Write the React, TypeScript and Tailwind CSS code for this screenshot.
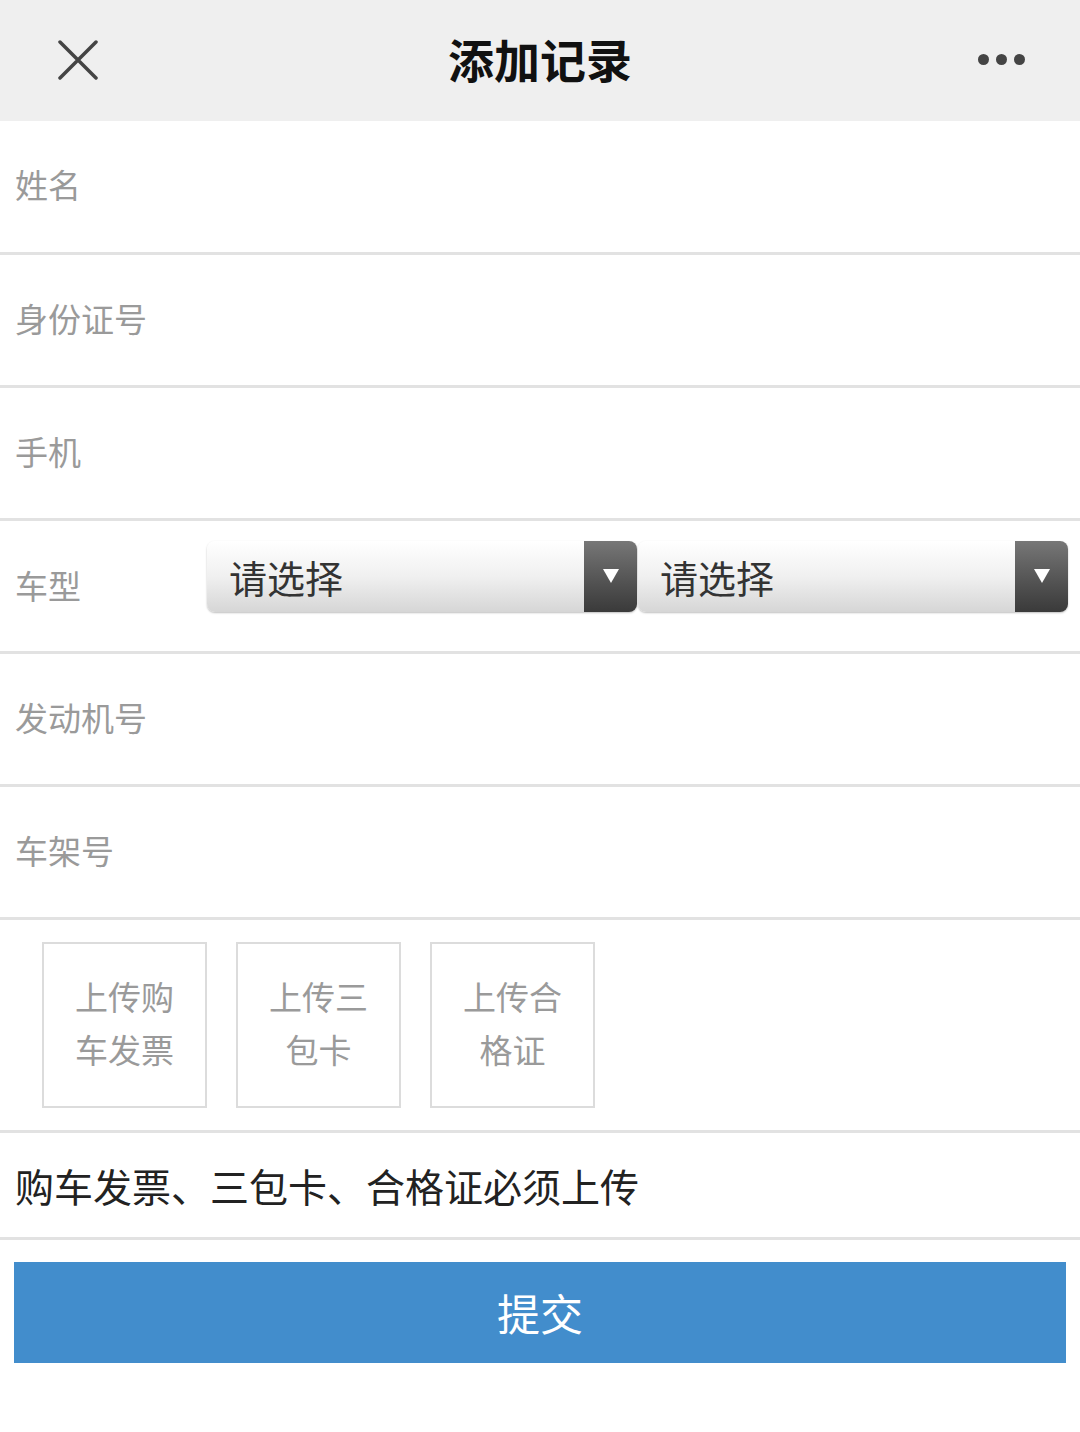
import React from "react";

const font = "font-['Noto_Sans_CJK_SC','Noto_Sans',sans-serif]";

const fields = ["姓名", "身份证号", "手机"];
const fields2 = ["发动机号", "车架号"];
const uploads = [
  ["上传购", "车发票"],
  ["上传三", "包卡"],
  ["上传合", "格证"],
];

const Select = () => (
  <div className="flex h-[71px] w-[430px] items-stretch overflow-hidden rounded-[8px] bg-gradient-to-b from-white via-[#f0f0f0] to-[#d6d6d6] shadow-[0_1px_2px_rgba(0,0,0,0.25)]">
    <div className="flex flex-1 items-center pl-[22px] text-[38px] text-[#333]">请选择</div>
    <div className="flex w-[53px] items-center justify-center bg-gradient-to-b from-[#777] to-[#3a3a3a]">
      <svg width="18" height="16" viewBox="0 0 18 16">
        <path d="M1 1 H17 L9 15 Z" fill="#fff" />
      </svg>
    </div>
  </div>
);

const Row = ({ label }: { label: string }) => (
  <div className="flex h-[133px] items-center border-b-[3px] border-[#e2e2e2] pb-[2px] pl-[15px] text-[33px] text-[#9a9a9a]">
    {label}
  </div>
);

export default function App() {
  return (
    <div className={`min-h-[1432px] w-[1080px] bg-white ${font}`}>
      <div className="relative flex h-[121px] items-center justify-center bg-[#efefef] pb-[4px]">
        <svg className="absolute left-[58px] top-[40px]" width="40" height="40" viewBox="0 0 40 40">
          <path d="M2 2 L38 38 M38 2 L2 38" stroke="#444" strokeWidth="3.5" strokeLinecap="round" />
        </svg>
        <h1 className="text-[46px] font-bold text-[#111]">添加记录</h1>
        <div className="absolute right-[55px] top-[54px] flex gap-[7px]">
          <span className="h-[11px] w-[11px] rounded-full bg-[#444]" />
          <span className="h-[11px] w-[11px] rounded-full bg-[#444]" />
          <span className="h-[11px] w-[11px] rounded-full bg-[#444]" />
        </div>
      </div>

      <div className="border-b-[3px] border-[#e2e2e2]">
        <div className="flex h-[131px] items-center pb-[4px] pl-[15px] text-[33px] text-[#9a9a9a]">姓名</div>
      </div>
      {fields.slice(1).map((f) => (
        <Row key={f} label={f} />
      ))}

      <div className="flex h-[133px] items-center border-b-[3px] border-[#e2e2e2] pl-[15px]">
        <div className="w-[192px] text-[33px] text-[#9a9a9a]">车型</div>
        <div className="-mt-[20px] flex gap-[1px]">
          <Select />
          <Select />
        </div>
      </div>

      {fields2.map((f) => (
        <Row key={f} label={f} />
      ))}

      <div className="flex h-[213px] gap-[29px] border-b-[3px] border-[#e2e2e2] pl-[42px] pt-[22px]">
        {uploads.map((u) => (
          <div
            key={u[0]}
            className="flex h-[166px] w-[165px] flex-col items-center justify-center border-2 border-[#dcdcdc] pb-[4px] text-[33px] leading-[53px] text-[#9a9a9a]"
          >
            <span>{u[0]}</span>
            <span>{u[1]}</span>
          </div>
        ))}
      </div>

      <div className="flex h-[107px] items-center border-b-[3px] border-[#e2e2e2] pl-[15px] text-[39px] text-[#222]">
        购车发票、三包卡、合格证必须上传
      </div>

      <div className="px-[14px] pt-[22px]">
        <button className="flex h-[101px] w-full items-center justify-center bg-[#428dcc] text-[43px] text-white">
          提交
        </button>
      </div>
    </div>
  );
}
